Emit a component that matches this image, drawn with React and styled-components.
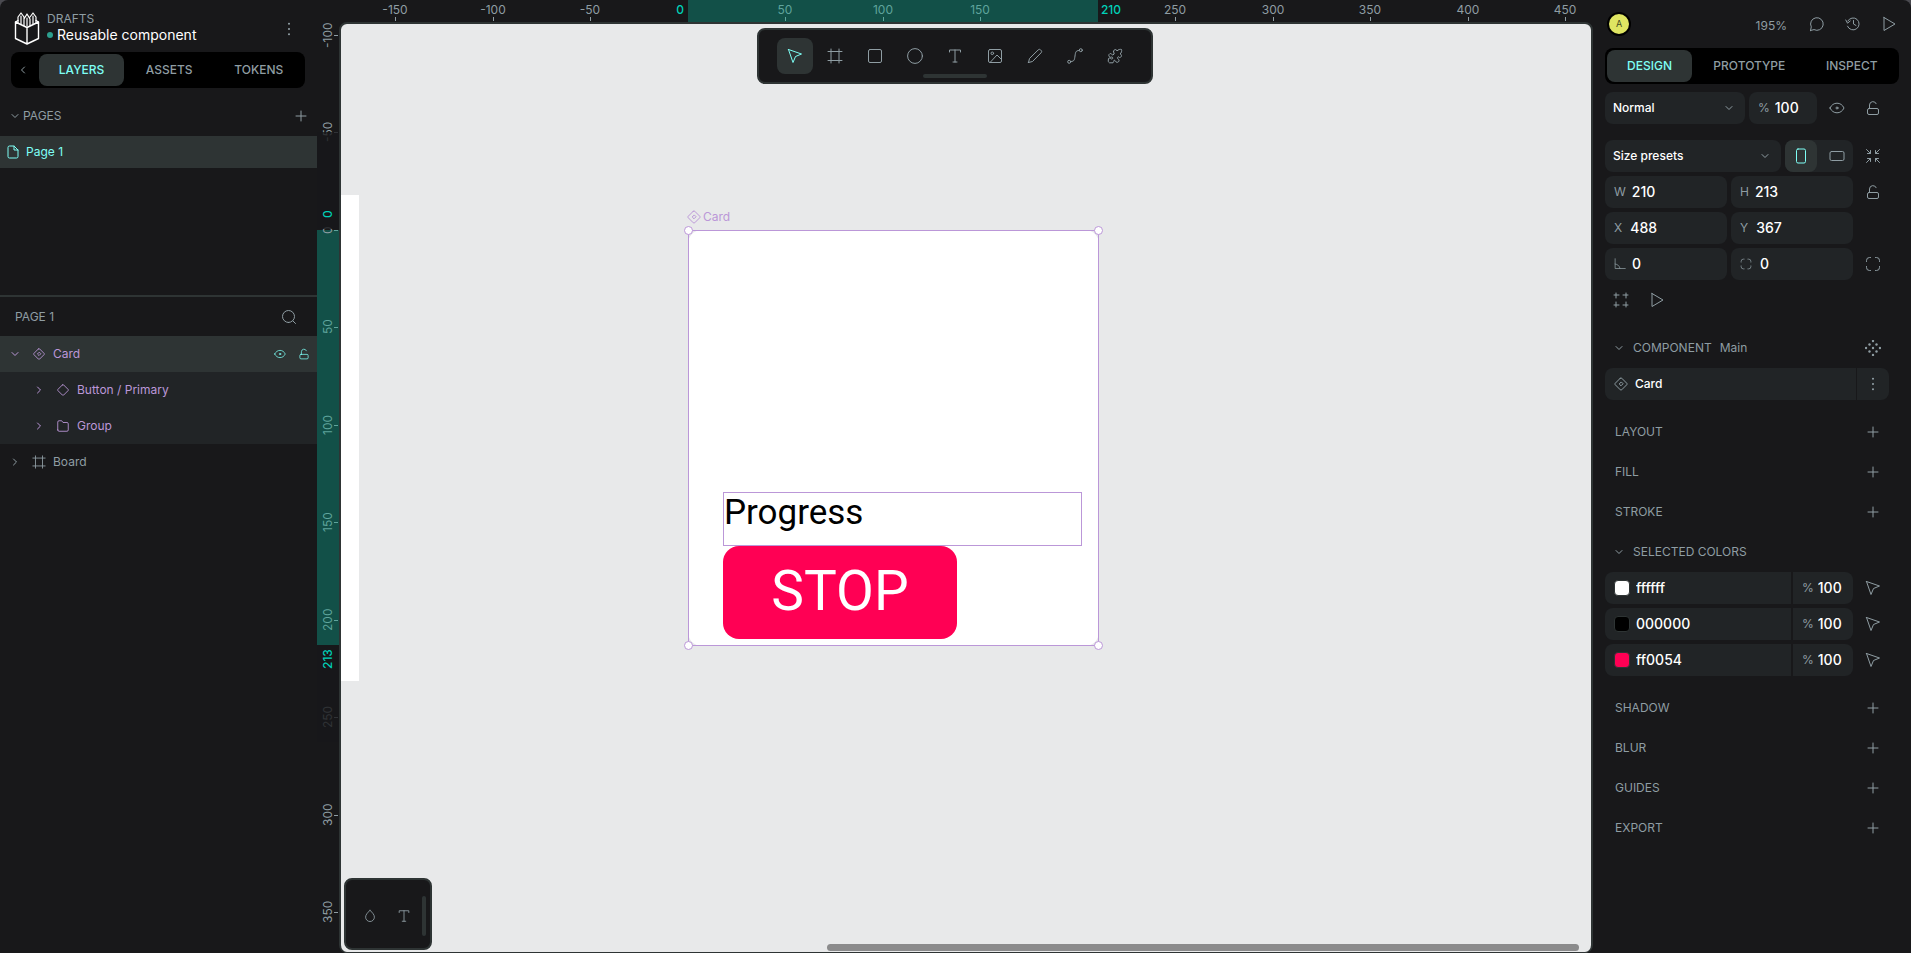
import React from "react";
import styled, { createGlobalStyle, css } from "styled-components";

const c = {
  bg: "#18181a",
  black: "#000000",
  field: "#212426",
  raised: "#2e3434",
  text: "#ffffff",
  muted: "#8f9da3",
  accent: "#7efff5",
  accentDim: "#00d1b8",
  violet: "#bb97d8",
  canvas: "#e8e9ea",
  range: "#125048",
};

const GlobalStyle = createGlobalStyle`
  *, *::before, *::after { box-sizing: border-box; }
  body {
    margin: 0;
    background: #4a4a50;
    color: ${c.muted};
    font: 400 12px/16px Inter, "Liberation Sans", sans-serif;
    overflow: hidden;
  }
  button, input, select { font: inherit; color: inherit; }
  h2, h3, p { margin: 0; font: inherit; }
`;

/* ---------- icons ---------- */

const Svg = styled.svg`
  display: block;
  flex: none;
  fill: none;
  stroke: currentColor;
  stroke-linecap: round;
  stroke-linejoin: round;
`;

const variantDots = [[8, 1], [4.5, 4.5], [11.5, 4.5], [1, 8], [8, 8], [15, 8], [4.5, 11.5], [11.5, 11.5], [8, 15]];

const shapes = {
  chevronDown: <path d="m5 6.500 3 3 3-3" />,
  chevronRight: <path d="m6.500 5 3 3-3 3" />,
  chevronLeft: <path d="m9.500 5-3 3 3 3" />,
  plus: <path d="M8 3v10M3 8h10" />,
  dots: (
    <g fill="currentColor" stroke="none">
      <circle cx="8" cy="2" r="1.200" />
      <circle cx="8" cy="8" r="1.200" />
      <circle cx="8" cy="14" r="1.200" />
    </g>
  ),
  page: <path d="M9 2H4.500A1.500 1.500 0 0 0 3 3.500v9A1.500 1.500 0 0 0 4.500 14h7a1.500 1.500 0 0 0 1.500-1.500V6L9 2v4h4" />,
  search: <path d="M7.500 13.500a6 6 0 1 0 0-12 6 6 0 0 0 0 12ZM12 12l2.500 2.500" />,
  component: (
    <>
      <path d="M7.300 2.200 2.200 7.300a1 1 0 0 0 0 1.400l5.100 5.100a1 1 0 0 0 1.400 0l5.100-5.100a1 1 0 0 0 0-1.400L8.700 2.200a1 1 0 0 0-1.400 0Z" />
      <path d="M8 6.200 6.200 8 8 9.800 9.800 8Z" />
    </>
  ),
  copy: <path d="M7.300 2.200 2.200 7.300a1 1 0 0 0 0 1.400l5.100 5.100a1 1 0 0 0 1.400 0l5.100-5.100a1 1 0 0 0 0-1.400L8.700 2.200a1 1 0 0 0-1.400 0Z" />,
  group: <path d="M2 12.500v-9A1.500 1.500 0 0 1 3.500 2h3L8 4h4.500A1.500 1.500 0 0 1 14 5.500v7a1.500 1.500 0 0 1-1.500 1.500h-9A1.500 1.500 0 0 1 2 12.500Z" />,
  board: <path d="M4 1v14M12 1v14M1 3.500h14M1 12.500h14" />,
  eye: (
    <>
      <path d="M1 8c1.500-3.200 4-4.800 7-4.800S13.500 4.800 15 8c-1.500 3.200-4 4.800-7 4.800S2.500 11.200 1 8Z" />
      <circle cx="8" cy="8" r="1" />
    </>
  ),
  lock: (
    <>
      <rect x="2.500" y="8.500" width="11" height="6" rx="1.500" />
      <path d="M4.500 8.500V5a3.500 3.500 0 0 1 6.700-1.300" />
    </>
  ),
  move: <path d="m1.500 1.500 4.500 13 2.500-6 6-2.500-13-4.500Z" />,
  rect: <rect x="1.500" y="1.500" width="13" height="13" rx="1.500" />,
  ellipse: <circle cx="8" cy="8" r="7.400" />,
  text: <path d="M2.500 4V2h11v2M8 2v12M6 14h4" />,
  image: (
    <>
      <rect x="1.500" y="1.500" width="13" height="13" rx="1.500" />
      <circle cx="5.300" cy="5.300" r="1.300" />
      <path d="m3.500 14 6.500-7 4.500 4.500" />
    </>
  ),
  pencil: <path d="m1.500 14.500 1-4 8.700-8.600a1.700 1.700 0 0 1 2.400 0l.5.5a1.700 1.700 0 0 1 0 2.400l-8.600 8.700-4 1Z" />,
  curve: (
    <>
      <circle cx="2.200" cy="13.800" r="1.500" />
      <circle cx="13.800" cy="2.200" r="1.500" />
      <path d="M4 13.500c3.500 0 3.500-2 4-5.500s.5-5.500 4-5.500" />
    </>
  ),
  puzzle: <path d="M6.500 3.500c-.2-2 3-3 3.500-.5 1-1.500 3.500-2 4.500-1.500.5 1 0 3.500-1.500 4.500 2.500.5 1.500 3.700-.5 3.500l-1.300-.8c-1 .9-1 1.300-.2 2.300 1.200.3 1.500 2 .3 3-1 .7-2.300.4-2.800-1l-1.200-1c-.5.900-.5 2-1.300 2.800H2.500L1.200 13.500l.3-3 1.500-.7 1.500 1.200c1.500.2 1.800-1.700.3-2l-1.300.3C1.500 9 1.200 6.500 3 5.500c1.200 0 1.500.8 2.800 1.500l1.400-1-.7-2.500Z" />,
  drop: <path d="M8 1.500c-3 3-5 5-5 7.800a5 5 0 0 0 10 0c0-2.800-2-4.800-5-7.800Z" />,
  comment: <path d="m1.500 14.500.8-3.600A6.300 6.300 0 1 1 5 13.600l-3.500.9Z" />,
  history: <path d="M2.500 10.200A6 6 0 1 0 2.800 5M.8 4l1.700 3.200L5.200 5M8.500 4.500V8l2.500 1.500" />,
  play: <path d="M3 1.500v13L14 8 3 1.500Z" />,
  portrait: <rect x="3.500" y="1" width="9" height="14" rx="1.500" />,
  landscape: <rect x="1" y="3.500" width="14" height="9" rx="1.500" />,
  fit: <path d="M5.500 2.500v3h-3M1.500 1.500l4 4M10.500 2.500v3h3M14.500 1.500l-4 4M5.500 13.500v-3h-3M1.500 14.500l4-4M10.500 13.500v-3h3M14.500 14.500l-4-4" />,
  angle: <path d="M1.500 1v13H15M1.500 8c3.500.5 6 2.500 6.500 6" />,
  corners: <path d="M1.500 5.500V4.500a3 3 0 0 1 3-3h1M10.500 1.500h1a3 3 0 0 1 3 3v1M14.500 10.500v1a3 3 0 0 1-3 3h-1M5.500 14.500h-1a3 3 0 0 1-3-3v-1" />,
  clip: <path d="M3 1v5M1 3h5M13 1v5M10 3h5M3 10v5M1 13h5M13 10v5M10 13h5" />,
  variants: (
    <g fill="currentColor" stroke="none">
      {variantDots.map(([x, y]) => (
        <circle key={`${x}-${y}`} cx={x} cy={y} r="1.200" />
      ))}
    </g>
  ),
};

const Icon = ({ name, size = 16 }) => (
  <Svg width={size} height={size} viewBox="0 0 16 16" aria-hidden="true">
    {shapes[name]}
  </Svg>
);

const Logo = () => (
  <Svg width="26" height="34" viewBox="0 0 26 34" color="#fff" strokeWidth="1.400" aria-hidden="true">
    <path d="M1.500 10v16.500L13 32l11.500-5.500V10L13 15.500 1.500 10ZM13 15.500V32" />
    <path d="M1.500 10 4 8.500M24.500 10 22 8.500" />
    <path d="M4 11V5l3-4 3 4v8.500M7 4v8M10 7l3-5 3 5v6.500M13 6v8M16 5l3-4 3 4v6M19 4v8" strokeWidth="1.200" />
  </Svg>
);

/* ---------- shared parts ---------- */

const Shell = styled.div`
  display: grid;
  grid-template-columns: 317px minmax(0, 1fr) 318px;
  height: 100vh;
  background: ${c.bg};
  border-radius: 8px 8px 0 0;
  overflow: hidden;
`;

const IconButton = styled.button`
  display: flex;
  align-items: center;
  justify-content: center;
  width: 32px;
  height: 32px;
  padding: 0;
  border: 0;
  border-radius: 8px;
  flex: none;
  background: ${(p) => (p.$active ? c.raised : "transparent")};
  color: ${(p) => (p.$active ? c.accent : c.muted)};
`;

const TabBar = styled.div`
  display: flex;
  gap: 2px;
  height: 36px;
  padding: 2px;
  border-radius: 8px;
  background: ${c.black};
`;

const Tab = styled.button`
  flex: ${(p) => (p.$active ? "0 0 85px" : "1 1 auto")};
  padding: 0;
  border: 0;
  border-radius: 8px;
  font-weight: 500;
  background: ${(p) => (p.$active ? c.raised : "transparent")};
  color: ${(p) => (p.$active ? c.accent : c.muted)};
`;

/* ---------- left sidebar ---------- */

const LeftPanel = styled.aside`
  display: flex;
  flex-direction: column;
  min-width: 0;
`;

const FileHeader = styled.header`
  display: flex;
  align-items: center;
  gap: 7px;
  height: 52px;
  padding: 6px 12px 0 14px;
`;

const FileInfo = styled.div`
  flex: 1;
  min-width: 0;
`;

const Project = styled.p`
  line-height: 12px;
`;

const FileName = styled.h2`
  display: flex;
  align-items: center;
  gap: 4px;
  color: ${c.text};
  font-size: 14px;
  line-height: 20px;
  &::before {
    content: "";
    width: 6px;
    height: 6px;
    border-radius: 50%;
    background: #2d9f8f;
  }
`;

const LeftTabs = styled.div`
  padding: 0 12px 0 11px;
`;

const Collapse = styled(IconButton)`
  width: 24px;
  padding-right: 4px;
`;

const PagesHeader = styled.div`
  display: flex;
  align-items: center;
  height: 32px;
  margin-top: 12px;
  padding: 0 0 0 7px;
  h3 { flex: 1; }
`;

const PageRow = styled.button`
  display: flex;
  align-items: center;
  gap: 5px;
  height: 32px;
  margin: 4px 0 127px;
  padding: 0 5px;
  border: 0;
  background: ${c.raised};
  color: ${c.accent};
`;

const LayersHeader = styled.div`
  display: flex;
  align-items: center;
  justify-content: space-between;
  height: 41px;
  padding: 0 12px 0 15px;
  border-top: 2px solid ${c.raised};
`;

const LayerRow = styled.div`
  display: flex;
  align-items: center;
  gap: 7px;
  height: 36px;
  padding: 0 2px 0 ${(p) => 7 + p.$depth * 24}px;
  background: ${(p) => (p.$selected ? c.raised : p.$depth ? c.field : "transparent")};
  color: ${(p) => (p.$violet ? c.violet : c.muted)};
  span { flex: 1; }
`;

const Twisty = styled.button`
  padding: 0;
  border: 0;
  background: none;
  margin-right: 2px;
`;

const LayerAction = styled.button`
  padding: 0;
  border: 0;
  background: none;
  width: 17px;
  color: ${c.accent};
`;

/* ---------- viewport ---------- */

const Viewport = styled.main`
  display: grid;
  grid-template: 22px minmax(0, 1fr) / 22px minmax(0, 1fr);
  min-width: 0;
`;

const TopRuler = styled.div`
  grid-column: 1 / 3;
  position: relative;
  overflow: hidden;
`;

const SideRuler = styled.div`
  position: relative;
  overflow: hidden;
`;

const Range = styled.div`
  position: absolute;
  background: ${c.range};
  ${(p) => (p.$side ? "left: 0; right: 0;" : "top: 0; bottom: 0;")}
`;

const Fade = styled.div`
  position: absolute;
  left: 0;
  right: 0;
  background: ${c.bg};
  opacity: 0.8;
`;

const markColor = (p) => (p.$edge ? c.accentDim : p.$inside ? "#5fa49c" : c.muted);

const TopMark = styled.div`
  position: absolute;
  top: 2px;
  width: 40px;
  margin-left: -20px;
  text-align: center;
  color: ${markColor};
  font-weight: ${(p) => (p.$edge ? 500 : 400)};
  &::after {
    content: "";
    display: ${(p) => (p.$edge ? "none" : "block")};
    width: 1px;
    height: 4px;
    margin: -1px auto 0;
    background: currentColor;
  }
`;

const SideMark = styled.div`
  position: absolute;
  left: 3px;
  height: 40px;
  margin-top: -20px;
  text-align: center;
  writing-mode: vertical-rl;
  transform: rotate(180deg);
  color: ${markColor};
  font-weight: ${(p) => (p.$edge ? 500 : 400)};
`;

const SideTick = styled.div`
  position: absolute;
  right: 1px;
  width: 4px;
  height: 1px;
  background: ${markColor};
`;

const Canvas = styled.section`
  position: relative;
  border: 2px solid ${c.raised};
  border-bottom-width: 1px;
  border-radius: 8px;
  background: ${c.canvas};
  overflow: hidden;
`;

/* Centred over the rulers and the canvas together, so half a ruler to the left. */
const Toolbar = styled.div`
  position: absolute;
  top: 4px;
  left: calc(50% - 11px);
  transform: translateX(-50%);
  display: flex;
  gap: 4px;
  padding: 8px 18px;
  border: 2px solid ${c.raised};
  border-radius: 8px;
  background: ${c.bg};
`;

const Tool = styled(IconButton)`
  width: 36px;
  height: 36px;
`;

const Grip = styled.div`
  position: absolute;
  border-radius: 2px;
  background: ${c.raised};
  ${(p) =>
    p.$vertical
      ? "right: 4px; top: 16px; bottom: 12px; width: 4px;"
      : "bottom: 4px; left: 50%; width: 64px; height: 4px; margin-left: -32px;"}
`;

const Palette = styled.div`
  position: absolute;
  left: 3px;
  bottom: 2px;
  display: flex;
  align-items: center;
  gap: 2px;
  width: 88px;
  height: 72px;
  padding: 4px 0 0 8px;
  border: 2px solid ${c.raised};
  border-radius: 8px;
  background: ${c.bg};
`;

const ScrollBar = styled.div`
  position: absolute;
  left: 486px;
  right: 12px;
  bottom: 1px;
  height: 7px;
  border-radius: 4px;
  background: #8b8b8c;
`;

const BoardShape = styled.div`
  position: absolute;
  left: 0;
  top: 171px;
  width: 18px;
  height: 486px;
  background: #fff;
`;

const Frame = styled.div`
  position: absolute;
  left: 347px;
  top: 206px;
  width: 411px;
  height: 416px;
  outline: 1px solid ${c.violet};
  outline-offset: -1px;
`;

const FrameLabel = styled.div`
  position: absolute;
  left: -2px;
  top: -21px;
  display: flex;
  gap: 1px;
  color: ${c.violet};
`;

const FrameBody = styled.div`
  display: flex;
  flex-direction: column;
  justify-content: flex-end;
  align-items: flex-start;
  height: 100%;
  padding: 0 17px 7px 35px;
  border-radius: 14px;
  background: #fff;
`;

const TextShape = styled.p`
  align-self: stretch;
  height: 54px;
  border: 1px solid ${c.violet};
  color: #000;
  && { font: 400 35px/40px Roboto, sans-serif; }
`;

const StopShape = styled.div`
  width: 234px;
  height: 93px;
  border-radius: 16px;
  background: #ff0054;
  color: #fff;
  font: 400 55px/90px Roboto, sans-serif;
  text-align: center;
`;

const Handle = styled.i`
  position: absolute;
  width: 9px;
  height: 9px;
  border: 1px solid ${c.violet};
  border-radius: 50%;
  background: #fff;
  ${(p) => p.$v}: -4px;
  ${(p) => p.$h}: -4px;
`;

/* ---------- right sidebar ---------- */

const RightPanel = styled.aside`
  display: flex;
  flex-direction: column;
  min-width: 0;
  padding: 0 12px;
`;

const UserBar = styled.header`
  display: flex;
  align-items: center;
  gap: 4px;
  height: 48px;
  margin-right: -6px;
`;

const Avatar = styled.button`
  width: 24px;
  height: 24px;
  margin: 0 auto 0 2px;
  padding: 0;
  border: 2px solid #000;
  border-radius: 50%;
  background: #dfe562;
  color: #444a20;
  font-size: 9px;
  line-height: 20px;
`;

const Zoom = styled.button`
  padding: 4px 10px 0 0;
  border: 0;
  background: none;
`;

const Options = styled.div`
  display: flex;
  flex-direction: column;
  gap: 16px;
  margin-top: 8px;
  padding-right: 10px;
`;

const Section = styled.section`
  display: flex;
  flex-direction: column;
  gap: ${(p) => p.$gap || 4}px;
`;

const Row = styled.div`
  display: grid;
  grid-template-columns: repeat(8, minmax(0, 1fr));
  gap: 4px;
  height: 32px;
`;

const fieldBox = css`
  display: flex;
  align-items: center;
  min-width: 0;
  height: 32px;
  border-radius: 8px;
  background: ${c.field};
`;

const Span = styled.div`
  grid-column: span ${(p) => p.$n};
  display: flex;
  gap: ${(p) => p.$gap ?? 4}px;
  min-width: 0;
`;

const SelectBox = styled.label`
  ${fieldBox}
  grid-column: span ${(p) => p.$n};
  position: relative;
  color: ${c.muted};
  > svg {
    position: absolute;
    right: 8px;
    pointer-events: none;
  }
`;

const Select = styled.select`
  appearance: none;
  width: 100%;
  height: 32px;
  padding: 0 24px 0 8px;
  border: 0;
  background: none;
  color: ${c.text};
  font-weight: 500;
  outline: none;
`;

const Field = styled.label`
  ${fieldBox}
  flex: ${(p) => p.$flex || "1 1 0"};
  gap: ${(p) => p.$gap || 6}px;
  padding: 0 8px 0 9px;
  border-radius: ${(p) => p.$radius || "8px"};
  ${(p) => p.$n && css`grid-column: span ${p.$n};`}
`;

const FieldInput = styled.input`
  width: 100%;
  min-width: 0;
  padding: 0;
  border: 0;
  outline: none;
  background: none;
  color: ${c.text};
  font-size: 14px;
  font-weight: 500;
`;

const ToggleGroup = styled.div`
  ${fieldBox}
  grid-column: span 2;
  justify-content: space-between;
`;

const SectionHead = styled.div`
  display: flex;
  align-items: center;
  height: 32px;
  padding-left: ${(p) => (p.$chevron ? 6 : 10)}px;
  h3 { margin-left: ${(p) => (p.$chevron ? 6 : 0)}px; }
  small { margin-left: 8px; font-size: 12px; }
  > button { margin-left: auto; }
`;

const ComponentRow = styled.div`
  display: flex;
  gap: 1px;
`;

const ComponentName = styled.div`
  ${fieldBox}
  flex: 1;
  gap: 6px;
  padding-left: 8px;
  border-radius: 8px 0 0 8px;
  span { color: ${c.text}; font-weight: 500; }
`;

const ComponentMenu = styled(IconButton)`
  border-radius: 0 8px 8px 0;
  background: ${c.field};
`;

const Swatch = styled.span`
  flex: none;
  width: 16px;
  height: 16px;
  border: 1px solid ${c.raised};
  border-radius: 4px;
`;

/* ---------- data ---------- */

const SCALE = 1.95;
const TOP_ORIGIN = 371;
const SIDE_ORIGIN = 208;
const topMarks = [-150, -100, -50, 50, 100, 150, 250, 300, 350, 400, 450];
const sideMarks = [-100, -50, 0, 50, 100, 150, 200, 250, 300, 350];
const at = (origin, v) => Math.floor(origin + v * SCALE);

const layers = [
  { name: "Card", icon: "component", depth: 0, open: true, selected: true, violet: true },
  { name: "Button / Primary", icon: "copy", depth: 1, violet: true },
  { name: "Group", icon: "group", depth: 1, violet: true },
  { name: "Board", icon: "board", depth: 0 },
];

const tools = [
  ["Move", "move"], ["Board", "board"], ["Rectangle", "rect"], ["Ellipse", "ellipse"], ["Text", "text"],
  ["Image", "image"], ["Curve", "pencil"], ["Path", "curve"], ["Plugins", "puzzle"],
];

const colors = ["ffffff", "000000", "ff0054"];

const Add = ({ title }) => (
  <SectionHead>
    <h3>{title}</h3>
    <IconButton aria-label={`Add ${title.toLowerCase()}`}><Icon name="plus" /></IconButton>
  </SectionHead>
);

export default function App() {
  return (
    <Shell>
      <GlobalStyle />
      <LeftPanel>
        <FileHeader>
          <Logo />
          <FileInfo>
            <Project>DRAFTS</Project>
            <FileName>Reusable component</FileName>
          </FileInfo>
          <IconButton aria-label="File menu"><Icon name="dots" size={14} /></IconButton>
        </FileHeader>
        <LeftTabs>
          <TabBar role="tablist">
            <Collapse aria-label="Collapse"><Icon name="chevronLeft" /></Collapse>
            <Tab role="tab" $active>LAYERS</Tab>
            <Tab role="tab">ASSETS</Tab>
            <Tab role="tab">TOKENS</Tab>
          </TabBar>
        </LeftTabs>
        <PagesHeader>
          <Icon name="chevronDown" />
          <h3>PAGES</h3>
          <IconButton aria-label="Add page"><Icon name="plus" /></IconButton>
        </PagesHeader>
        <PageRow>
          <Icon name="page" />
          Page 1
        </PageRow>
        <LayersHeader>
          <h3>PAGE 1</h3>
          <IconButton aria-label="Search layers"><Icon name="search" /></IconButton>
        </LayersHeader>
        {layers.map((l) => (
          <LayerRow key={l.name} $depth={l.depth} $selected={l.selected} $violet={l.violet}>
            <Twisty aria-label={`Toggle ${l.name}`}>
              <Icon name={l.open ? "chevronDown" : "chevronRight"} />
            </Twisty>
            <Icon name={l.icon} size={14} />
            <span>{l.name}</span>
            {l.selected && (
              <>
                <LayerAction aria-label="Hide"><Icon name="eye" size={12} /></LayerAction>
                <LayerAction aria-label="Lock"><Icon name="lock" size={12} /></LayerAction>
              </>
            )}
          </LayerRow>
        ))}
      </LeftPanel>

      <Viewport>
        <TopRuler>
          <Range style={{ left: at(TOP_ORIGIN, 0), width: at(1, 210) }} />
          {topMarks.map((v) => (
            <TopMark key={v} $inside={v >= 0 && v <= 210} style={{ left: at(TOP_ORIGIN, v) }}>{v}</TopMark>
          ))}
          <TopMark $edge style={{ left: at(TOP_ORIGIN, -4) }}>0</TopMark>
          <TopMark $edge style={{ left: at(TOP_ORIGIN, 217) }}>210</TopMark>
        </TopRuler>
        <SideRuler>
          <Range $side style={{ top: at(SIDE_ORIGIN, 0), height: at(0, 213) }} />
          {sideMarks.map((v) => (
            <React.Fragment key={v}>
              <SideMark $inside={v > 0 && v <= 213} style={{ top: at(SIDE_ORIGIN, v) }}>{v}</SideMark>
              <SideTick $inside={v >= 0 && v <= 213} style={{ top: at(SIDE_ORIGIN, v) }} />
            </React.Fragment>
          ))}
          <Fade style={{ top: at(SIDE_ORIGIN, -50), height: at(0, 50) }} />
          <Fade style={{ top: at(SIDE_ORIGIN, 213), height: at(0, 50) }} />
          <SideMark $edge style={{ top: at(SIDE_ORIGIN, -8) }}>0</SideMark>
          <SideMark $edge style={{ top: at(SIDE_ORIGIN, 220) }}>213</SideMark>
        </SideRuler>
        <Canvas>
          <BoardShape />
          <Frame>
            <FrameBody>
              <TextShape>Progress</TextShape>
              <StopShape>STOP</StopShape>
            </FrameBody>
            <FrameLabel><Icon name="component" />Card</FrameLabel>
            <Handle $v="top" $h="left" />
            <Handle $v="top" $h="right" />
            <Handle $v="bottom" $h="left" />
            <Handle $v="bottom" $h="right" />
          </Frame>
          <Toolbar role="toolbar">
            {tools.map(([label, icon], i) => (
              <Tool key={label} aria-label={label} $active={i === 0}><Icon name={icon} /></Tool>
            ))}
            <Grip />
          </Toolbar>
          <Palette>
            <IconButton aria-label="Color palette"><Icon name="drop" size={14} /></IconButton>
            <IconButton aria-label="Typographies"><Icon name="text" size={14} /></IconButton>
            <Grip $vertical />
          </Palette>
          <ScrollBar />
        </Canvas>
      </Viewport>

      <RightPanel>
        <UserBar>
          <Avatar>A</Avatar>
          <Zoom>195%</Zoom>
          <IconButton aria-label="Comments"><Icon name="comment" /></IconButton>
          <IconButton aria-label="History"><Icon name="history" /></IconButton>
          <IconButton aria-label="Play"><Icon name="play" /></IconButton>
        </UserBar>
        <TabBar role="tablist">
          <Tab role="tab" $active>DESIGN</Tab>
          <Tab role="tab">PROTOTYPE</Tab>
          <Tab role="tab">INSPECT</Tab>
        </TabBar>
        <Options>
          <Row>
            <SelectBox $n={4}>
              <Select aria-label="Blend mode"><option>Normal</option></Select>
              <Icon name="chevronDown" />
            </SelectBox>
            <Field $n={2} $gap={5}>%<FieldInput defaultValue="100" /></Field>
            <IconButton aria-label="Hide"><Icon name="eye" /></IconButton>
            <IconButton aria-label="Lock"><Icon name="lock" /></IconButton>
          </Row>
          <Section>
            <Row>
              <SelectBox $n={5}>
                <Select aria-label="Size presets"><option>Size presets</option></Select>
                <Icon name="chevronDown" />
              </SelectBox>
              <ToggleGroup>
                <IconButton aria-label="Vertical" $active><Icon name="portrait" /></IconButton>
                <IconButton aria-label="Horizontal"><Icon name="landscape" /></IconButton>
              </ToggleGroup>
              <IconButton aria-label="Fit to content"><Icon name="fit" /></IconButton>
            </Row>
            <Row>
              <Span $n={7}>
                <Field>W<FieldInput defaultValue="210" /></Field>
                <Field>H<FieldInput defaultValue="213" /></Field>
              </Span>
              <IconButton aria-label="Lock proportions"><Icon name="lock" /></IconButton>
            </Row>
            <Row>
              <Span $n={7}>
                <Field $gap={8}>X<FieldInput defaultValue="488" /></Field>
                <Field $gap={8}>Y<FieldInput defaultValue="367" /></Field>
              </Span>
            </Row>
            <Row>
              <Span $n={7}>
                <Field><Icon name="angle" size={12} /><FieldInput aria-label="Rotation" defaultValue="0" /></Field>
                <Field $gap={8}><Icon name="corners" size={12} /><FieldInput aria-label="Radius" defaultValue="0" /></Field>
              </Span>
              <IconButton aria-label="Independent radius"><Icon name="corners" /></IconButton>
            </Row>
            <Row>
              <IconButton aria-label="Clip content"><Icon name="clip" /></IconButton>
              <IconButton aria-label="Show in view mode"><Icon name="play" /></IconButton>
            </Row>
          </Section>
          <Section>
            <SectionHead $chevron>
              <Icon name="chevronDown" />
              <h3>COMPONENT</h3>
              <small>Main</small>
              <IconButton aria-label="Variants"><Icon name="variants" /></IconButton>
            </SectionHead>
            <ComponentRow>
              <ComponentName><Icon name="component" /><span>Card</span></ComponentName>
              <ComponentMenu aria-label="Component menu"><Icon name="dots" size={14} /></ComponentMenu>
            </ComponentRow>
          </Section>
          <Section $gap={8}>
            <Add title="LAYOUT" />
            <Add title="FILL" />
            <Add title="STROKE" />
            <Section>
              <SectionHead $chevron>
                <Icon name="chevronDown" />
                <h3>SELECTED COLORS</h3>
              </SectionHead>
              {colors.map((hex) => (
                <Row key={hex}>
                  <Span $n={7} $gap={2}>
                    <Field $radius="8px 0 0 8px">
                      <Swatch style={{ background: `#${hex}` }} />
                      <FieldInput aria-label="Color" defaultValue={hex} />
                    </Field>
                    <Field $flex="0 0 60px" $gap={4} $radius="0 8px 8px 0">%<FieldInput defaultValue="100" /></Field>
                  </Span>
                  <IconButton aria-label="Select shapes"><Icon name="move" /></IconButton>
                </Row>
              ))}
            </Section>
          </Section>
          <Section $gap={8}>
            <Add title="SHADOW" />
            <Add title="BLUR" />
            <Add title="GUIDES" />
            <Add title="EXPORT" />
          </Section>
        </Options>
      </RightPanel>
    </Shell>
  );
}
